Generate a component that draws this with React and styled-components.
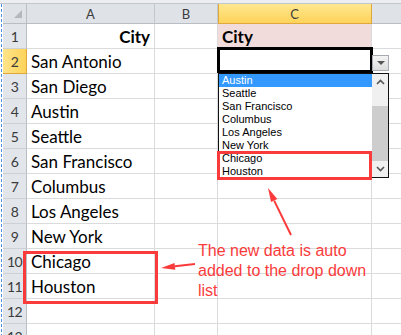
import React from 'react';
import styled, { createGlobalStyle } from 'styled-components';

const GlobalStyle = createGlobalStyle`
  body {
    margin: 0;
    background: #fff;
  }
`;

const Sheet = styled.div`
  position: relative;
  width: 401px;
  height: 335px;
  overflow: hidden;
  background: #fff;
  font-family: Lato, "Liberation Sans", sans-serif;
`;

const TopStrip = styled.div`
  height: 3px;
  background: #eceef1;
  border-bottom: 1px solid #c3c7cc;
`;

const Body = styled.div`
  display: flex;
`;

const Gutter = styled.div`
  width: 3px;
  flex: none;
  background-image: repeating-linear-gradient(to bottom, #4a8fe0 0 3px, transparent 3px 5px);
  background-size: 1px 100%;
  background-position: 1px 0;
  background-repeat: no-repeat;
`;

const Grid = styled.div`
  display: grid;
  grid-template-columns: 24px 128px 63px 154px 30px;
  grid-template-rows: 20px repeat(13, 25px);
`;

const Corner = styled.div`
  position: relative;
  background: #dfe3e8;
  border-right: 1px solid #b9bec5;
  border-bottom: 1px solid #b9bec5;
  &::after {
    content: '';
    position: absolute;
    right: 4px;
    bottom: 5px;
    border-left: 8px solid transparent;
    border-bottom: 8px solid #b3b8bf;
  }
`;

const ColHead = styled.div`
  display: flex;
  align-items: center;
  justify-content: center;
  font-size: 13px;
  color: #3b3b3b;
  background: ${(p) => (p.$active ? 'linear-gradient(#ffe78f, #fdd35a)' : '#dfe3e8')};
  border-right: 1px solid ${(p) => (p.$active ? '#e0a83c' : '#c3c8ce')};
  border-bottom: 1px solid ${(p) => (p.$active ? '#e0a83c' : '#b9bec5')};
  ${(p) => p.$active && 'box-shadow: inset 1px 0 0 #e0a83c;'}
`;

const RowHead = styled.div`
  display: flex;
  align-items: center;
  justify-content: center;
  font-size: 14px;
  letter-spacing: -0.5px;
  color: #3b3b3b;
  background: ${(p) => (p.$active ? 'linear-gradient(90deg, #ffe48a, #fdd35a)' : '#e2e6eb')};
  border-right: 1px solid ${(p) => (p.$active ? '#e0a83c' : '#b9bec5')};
  border-bottom: 1px solid ${(p) => (p.$active ? '#e0a83c' : '#cdd1d6')};
`;

const Cell = styled.div`
  display: flex;
  align-items: flex-end;
  justify-content: ${(p) => (p.$right ? 'flex-end' : 'flex-start')};
  padding: 0 4px 1px 4px;
  font-size: 17px;
  font-weight: ${(p) => (p.$bold ? 700 : 400)};
  color: #000;
  white-space: nowrap;
  background: ${(p) => p.$bg || '#fff'};
  border-right: 1px solid #d9dbdd;
  border-bottom: 1px solid #d9dbdd;
`;

const SelectBox = styled.div`
  position: absolute;
  left: 217px;
  top: 47px;
  width: 156px;
  height: 26px;
  box-sizing: border-box;
  border: 3px solid #000;
`;

const DropButton = styled.div`
  position: absolute;
  left: 372px;
  top: 55px;
  width: 17px;
  height: 16px;
  box-sizing: border-box;
  border: 1px solid #a7abb0;
  background: linear-gradient(#f4f4f4, #dcdcdc);
  display: flex;
  align-items: center;
  justify-content: center;
  &::after {
    content: '';
    border-left: 4px solid transparent;
    border-right: 4px solid transparent;
    border-top: 4px solid #555;
  }
`;

const DropList = styled.div`
  position: absolute;
  left: 218px;
  top: 73px;
  width: 171px;
  height: 105px;
  box-sizing: border-box;
  border: 1px solid #111;
  background: #fff;
  display: flex;
  font-family: "Liberation Sans", Arial, sans-serif;
`;

const Items = styled.div`
  flex: 1;
  display: flex;
  flex-direction: column;
`;

const Item = styled.div`
  height: 13px;
  line-height: 13px;
  padding: 0 3px;
  font-size: 11px;
  color: ${(p) => (p.$selected ? '#fff' : '#000')};
  background: ${(p) => (p.$selected ? '#3399ff' : 'transparent')};
`;

const Scrollbar = styled.div`
  width: 16px;
  flex: none;
  display: flex;
  flex-direction: column;
  background: #f0f0f0;
`;

const ScrollArrow = styled.div`
  height: 16px;
  display: flex;
  align-items: center;
  justify-content: center;
`;

const Track = styled.div`
  flex: 1;
  display: flex;
  flex-direction: column;
  padding-top: 16px;
`;

const Thumb = styled.div`
  flex: 1;
  background: #cdcdcd;
`;

const RedBox = styled.div`
  position: absolute;
  left: ${(p) => p.$x}px;
  top: ${(p) => p.$y}px;
  width: ${(p) => p.$w}px;
  height: ${(p) => p.$h}px;
  box-sizing: border-box;
  border: 3px solid #fa3b3b;
`;

const Note = styled.div`
  position: absolute;
  left: 198px;
  top: 241px;
  width: 176px;
  font-family: "Liberation Sans", Arial, sans-serif;
  font-size: 16px;
  line-height: 20px;
  color: #fa3b3b;
`;

const Overlay = styled.svg`
  position: absolute;
  left: 0;
  top: 0;
  pointer-events: none;
`;

const cities = [
  'San Antonio',
  'San Diego',
  'Austin',
  'Seattle',
  'San Francisco',
  'Columbus',
  'Los Angeles',
  'New York',
  'Chicago',
  'Houston',
];

const listItems = ['Austin', 'Seattle', 'San Francisco', 'Columbus', 'Los Angeles', 'New York', 'Chicago', 'Houston'];

function Arrow({ x1, y1, x2, y2 }) {
  const dx = x2 - x1;
  const dy = y2 - y1;
  const len = Math.hypot(dx, dy);
  const ux = dx / len;
  const uy = dy / len;
  const bx = x2 - ux * 14;
  const by = y2 - uy * 14;
  const px = -uy * 3.5;
  const py = ux * 3.5;
  return (
    <g>
      <line x1={x1} y1={y1} x2={bx} y2={by} stroke="#fa3b3b" strokeWidth="2" />
      <polygon points={`${x2},${y2} ${bx + px},${by + py} ${bx - px},${by - py}`} fill="#fa3b3b" />
    </g>
  );
}

function Chevron({ up }) {
  return (
    <svg width="9" height="6" viewBox="0 0 9 6">
      <polyline
        points={up ? '1,5 4.5,1.5 8,5' : '1,1 4.5,4.5 8,1'}
        fill="none"
        stroke="#555"
        strokeWidth="1.6"
      />
    </svg>
  );
}

export default function App() {
  const rows = [];
  for (let r = 1; r <= 13; r++) {
    let a = null;
    let c = null;
    if (r === 1) {
      a = <Cell $right $bold>City</Cell>;
      c = <Cell $bold $bg="#f2dcdb">City</Cell>;
    } else {
      a = <Cell>{cities[r - 2] || ''}</Cell>;
      c = <Cell />;
    }
    rows.push(
      <React.Fragment key={r}>
        <RowHead $active={r === 2}>{r}</RowHead>
        {a}
        <Cell />
        {c}
        <Cell />
      </React.Fragment>
    );
  }

  return (
    <>
      <GlobalStyle />
      <Sheet>
        <TopStrip />
        <Body>
          <Gutter />
          <Grid>
            <Corner />
            <ColHead>A</ColHead>
            <ColHead>B</ColHead>
            <ColHead $active>C</ColHead>
            <ColHead />
            {rows}
          </Grid>
        </Body>

        <SelectBox />
        <DropButton />
        <DropList>
          <Items>
            {listItems.map((name, i) => (
              <Item key={name} $selected={i === 0}>
                {name}
              </Item>
            ))}
          </Items>
          <Scrollbar>
            <ScrollArrow>
              <Chevron up />
            </ScrollArrow>
            <Track>
              <Thumb />
            </Track>
            <ScrollArrow>
              <Chevron />
            </ScrollArrow>
          </Scrollbar>
        </DropList>

        <RedBox $x={217} $y={151} $w={155} $h={29} />
        <RedBox $x={23} $y={251} $w={135} $h={53} />

        <Note>The new data is auto added to the drop down list</Note>

        <Overlay width="401" height="335">
          <Arrow x1={195} y1={264} x2={161} y2={268} />
          <Arrow x1={291} y1={235} x2={268} y2={188} />
        </Overlay>
      </Sheet>
    </>
  );
}
